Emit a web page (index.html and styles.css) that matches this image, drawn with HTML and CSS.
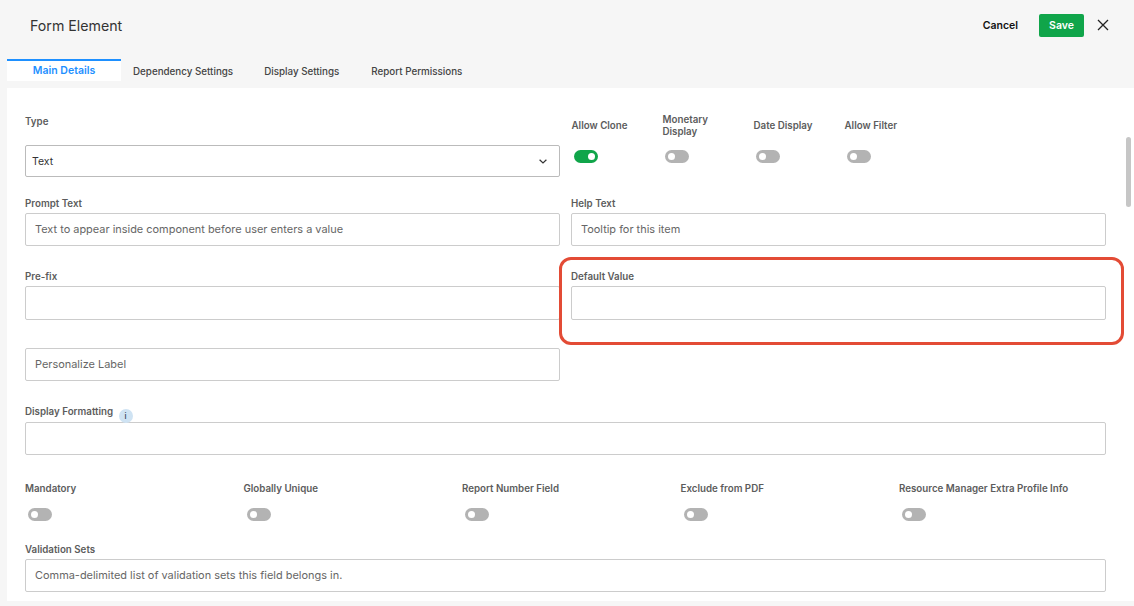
FILE: index.html
```html
<!DOCTYPE html>
<html lang="en">
<head>
<meta charset="utf-8">
<title>Form Element</title>
<link rel="stylesheet" href="styles.css">
</head>
<body>
<header class="header">
  <h1 class="title">Form Element</h1>
  <div class="actions">
    <span class="cancel">Cancel</span>
    <span class="save">Save</span>
    <svg class="close" width="12" height="12" viewBox="0 0 12 12"><path d="M1 1l10 10M11 1L1 11" stroke="#222" stroke-width="1.3" fill="none"/></svg>
  </div>
</header>
<nav class="tabs">
  <span class="tab active">Main Details</span>
  <span class="tab dep">Dependency Settings</span>
  <span class="tab disp">Display Settings</span>
  <span class="tab rep">Report Permissions</span>
</nav>
<main class="panel">
  <div class="row row-type">
    <div class="col">
      <div class="label">Type</div>
      <div class="input select"><span class="value">Text</span>
        <svg width="8" height="5" viewBox="0 0 8 5"><path d="M.6.7L4 4 7.4.7" stroke="#333" stroke-width="1.2" fill="none"/></svg>
      </div>
    </div>
    <div class="col toggles">
      <div class="tog-item"><div class="label tog-label">Allow Clone</div><span class="toggle on"></span></div>
      <div class="tog-item"><div class="label tog-label">Monetary Display</div><span class="toggle"></span></div>
      <div class="tog-item"><div class="label tog-label">Date Display</div><span class="toggle"></span></div>
      <div class="tog-item"><div class="label tog-label">Allow Filter</div><span class="toggle"></span></div>
    </div>
  </div>
  <div class="row row-prompt">
    <div class="col"><div class="label">Prompt Text</div><div class="input ph">Text to appear inside component before user enters a value</div></div>
    <div class="col"><div class="label">Help Text</div><div class="input ph">Tooltip for this item</div></div>
  </div>
  <div class="row row-prefix">
    <div class="col"><div class="label">Pre-fix</div><div class="input"></div></div>
    <div class="col"><div class="label">Default Value</div><div class="input"></div></div>
  </div>
  <div class="row row-person">
    <div class="col"><div class="input ph">Personalize Label</div></div>
  </div>
  <div class="full row-format">
    <div class="label">Display Formatting <span class="info">i</span></div>
    <div class="input"></div>
  </div>
  <div class="five">
    <div><div class="label">Mandatory</div><span class="toggle"></span></div>
    <div><div class="label">Globally Unique</div><span class="toggle"></span></div>
    <div><div class="label">Report Number Field</div><span class="toggle"></span></div>
    <div><div class="label">Exclude from PDF</div><span class="toggle"></span></div>
    <div><div class="label">Resource Manager Extra Profile Info</div><span class="toggle"></span></div>
  </div>
  <div class="full row-valid">
    <div class="label">Validation Sets</div>
    <div class="input ph">Comma-delimited list of validation sets this field belongs in.</div>
  </div>
  <div class="highlight"></div>
  <div class="scrollbar"></div>
</main>
</body>
</html>
```

FILE: styles.css
```css
* { box-sizing: border-box; }
html, body { margin: 0; height: 100%; }
body {
  width: 1134px;
  height: 606px;
  overflow: hidden;
  background: #f6f6f6;
  font-family: Inter, "Liberation Sans", sans-serif;
  color: #555;
}
.header {
  height: 59px;
  display: flex;
  align-items: center;
  justify-content: space-between;
  padding: 0 25px 9px 30px;
}
.title { margin: 0; font-size: 14.2px; font-weight: 400; color: #333; }
.actions { display: flex; align-items: center; }
.cancel { font-size: 10.5px; font-weight: 600; color: #111; margin-right: 21px; }
.save {
  width: 45px; height: 23px;
  display: flex; align-items: center; justify-content: center;
  background: #10a54a; color: #fff;
  font-size: 10.5px; font-weight: 600;
  border-radius: 2px;
  margin-right: 13px;
}
.tabs { display: flex; height: 22px; margin-left: 7px; }
.tab { font-size: 9.8px; font-weight: 500; color: #444; line-height: 25px; }
.tab.active {
  width: 114px;
  text-align: center;
  background: #fff;
  border-top: 2px solid #1e90ff;
  color: #1e90ff;
  font-size: 10.5px;
  font-weight: 600;
  line-height: 19px;
}
.dep { margin-left: 12px; }
.disp { margin-left: 31px; }
.rep { margin-left: 32px; }
.panel {
  position: relative;
  margin: 7px 0 0 7px;
  width: 1127px;
  height: 513px;
  background: #fff;
  padding: 0 18px;
  overflow: hidden;
}
.row { display: grid; grid-template-columns: 535px 535px; column-gap: 11px; }
.label { margin-top: 1px; font-size: 9.75px; font-weight: 600; color: #5c5c5c; line-height: 12px; }
.input {
  height: 33px;
  margin-top: 3px;
  border: 1px solid #ccc;
  border-radius: 2px;
  background: #fff;
  padding: 0 9px;
  font-size: 10.95px;
  line-height: 31px;
  color: #666;
}
.select {
  display: flex; align-items: center; justify-content: space-between;
  height: 32px;
  margin-top: 17px;
  padding: 0 12px 0 6px;
  border-color: #bbb;
  font-size: 10.5px;
  color: #333;
}
.row-type { padding-top: 27px; }
.toggles { display: flex; padding-left: 0.5px; }
.tog-item { width: 91px; padding-right: 12px; }
.tog-label { margin-top: -1.5px; height: 24px; display: flex; align-items: center; }
.toggles .toggle { margin: 12.5px 0 0 2.5px; }
.toggle {
  display: block;
  position: relative;
  width: 24px; height: 13px;
  border-radius: 7px;
  background: #b3b3b3;
}
.toggle::after {
  content: "";
  position: absolute;
  left: 3px; top: 3px;
  width: 7px; height: 7px;
  border-radius: 50%;
  background: #fff;
}
.toggle.on { background: #10a54a; }
.toggle.on::after { left: 14px; }
.row-prompt { margin-top: 20px; }
.row-prefix { margin-top: 24px; }
.row-prefix .input { height: 34px; }
.row-person { margin-top: 28px; }
.row-person .input { margin-top: 0; }
.full { width: 1081px; }
.row-format { margin-top: 25px; }
.row-format .input { margin-top: -1px; height: 33px; }
.info {
  display: inline-block;
  width: 14px; height: 14px;
  margin-left: 3px;
  border-radius: 50%;
  background: #cfe3f3;
  color: #345;
  font-size: 8px;
  font-weight: 500;
  line-height: 14px;
  text-align: center;
  vertical-align: -4px;
}
.five { display: flex; margin-top: 27px; }
.five > div { width: 218.5px; flex: none; }
.five > div:last-child { width: 207px; }
.five .toggle { margin: 13px 0 0 3px; }
.row-valid { margin-top: 23px; }
.highlight {
  position: absolute;
  left: 552px; top: 169px;
  width: 565px; height: 88px;
  border: 3px solid #e34b35;
  border-radius: 12px;
}
.scrollbar {
  position: absolute;
  left: 1119px; top: 49px;
  width: 5px; height: 70px;
  border-radius: 3px;
  background: #c6c6c6;
}
```
